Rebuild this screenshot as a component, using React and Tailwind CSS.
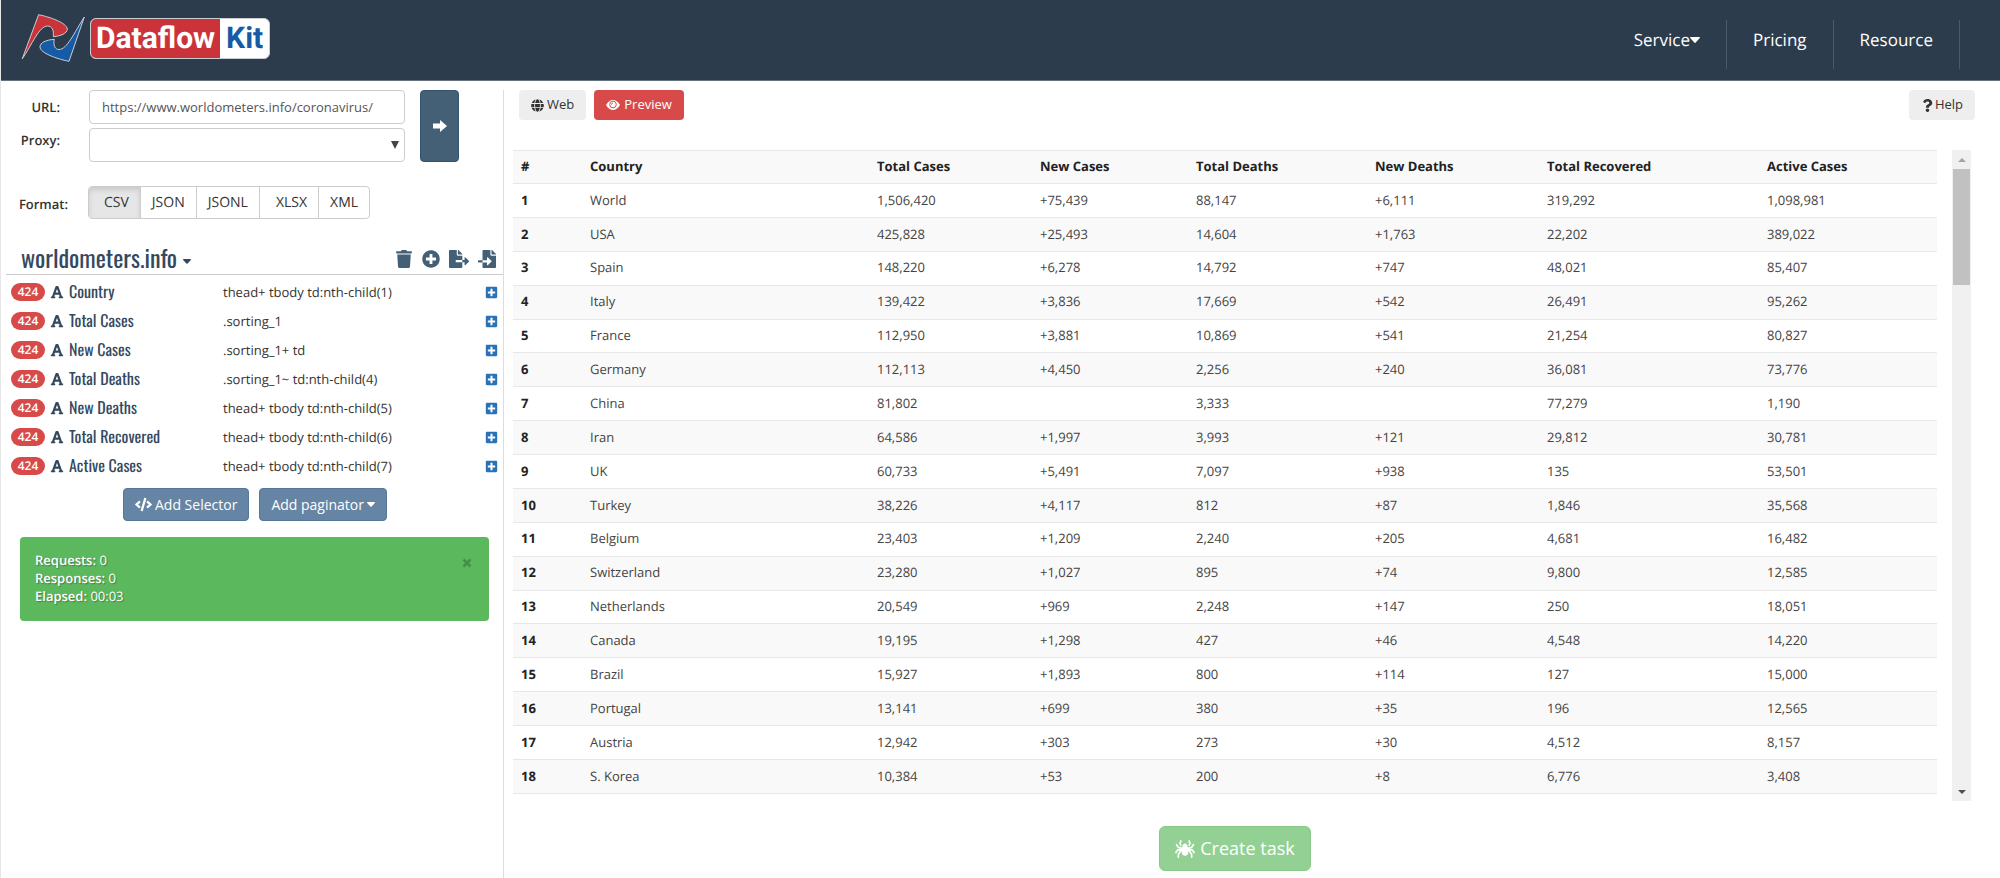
import React, { useState } from 'react';
import {
  FaTrash,
  FaPlusCircle,
  FaFileExport,
  FaFileImport,
  FaPlusSquare,
  FaFont,
  FaCode,
  FaGlobe,
  FaQuestion,
  FaSpider,
} from 'react-icons/fa';

const FORMATS = ['CSV', 'JSON', 'JSONL', 'XLSX', 'XML'];

const SELECTORS = [
  { name: 'Country', path: 'thead+ tbody td:nth-child(1)' },
  { name: 'Total Cases', path: '.sorting_1' },
  { name: 'New Cases', path: '.sorting_1+ td' },
  { name: 'Total Deaths', path: '.sorting_1~ td:nth-child(4)' },
  { name: 'New Deaths', path: 'thead+ tbody td:nth-child(5)' },
  { name: 'Total Recovered', path: 'thead+ tbody td:nth-child(6)' },
  { name: 'Active Cases', path: 'thead+ tbody td:nth-child(7)' },
];

const COLUMNS = ['#', 'Country', 'Total Cases', 'New Cases', 'Total Deaths', 'New Deaths', 'Total Recovered', 'Active Cases'];

const ROWS = [
  ['World', '1,506,420', '+75,439', '88,147', '+6,111', '319,292', '1,098,981'],
  ['USA', '425,828', '+25,493', '14,604', '+1,763', '22,202', '389,022'],
  ['Spain', '148,220', '+6,278', '14,792', '+747', '48,021', '85,407'],
  ['Italy', '139,422', '+3,836', '17,669', '+542', '26,491', '95,262'],
  ['France', '112,950', '+3,881', '10,869', '+541', '21,254', '80,827'],
  ['Germany', '112,113', '+4,450', '2,256', '+240', '36,081', '73,776'],
  ['China', '81,802', '', '3,333', '', '77,279', '1,190'],
  ['Iran', '64,586', '+1,997', '3,993', '+121', '29,812', '30,781'],
  ['UK', '60,733', '+5,491', '7,097', '+938', '135', '53,501'],
  ['Turkey', '38,226', '+4,117', '812', '+87', '1,846', '35,568'],
  ['Belgium', '23,403', '+1,209', '2,240', '+205', '4,681', '16,482'],
  ['Switzerland', '23,280', '+1,027', '895', '+74', '9,800', '12,585'],
  ['Netherlands', '20,549', '+969', '2,248', '+147', '250', '18,051'],
  ['Canada', '19,195', '+1,298', '427', '+46', '4,548', '14,220'],
  ['Brazil', '15,927', '+1,893', '800', '+114', '127', '15,000'],
  ['Portugal', '13,141', '+699', '380', '+35', '196', '12,565'],
  ['Austria', '12,942', '+303', '273', '+30', '4,512', '8,157'],
  ['S. Korea', '10,384', '+53', '200', '+8', '6,776', '3,408'],
];

function Caret({ className }) {
  return (
    <svg viewBox="0 0 10 6" className={className} fill="currentColor" aria-hidden="true">
      <path d="M0.700 0h8.600c.6 0 .9.700.5 1.100L5.500 5.700c-.3.300-.7.300-1 0L.2 1.100C-.2.700.1 0 .7 0z" />
    </svg>
  );
}

function Logo() {
  return (
    <a href="#" aria-label="Dataflow Kit" className="flex items-center gap-[3px]">
      <svg viewBox="0 0 66 52" className="h-[52px] w-[66px]" stroke="#c9ced3" strokeWidth="1" strokeLinejoin="round">
        <path d="M1.300 46.700 L17.600 2.700 C29 5 46 11 46.300 17 C46 21.500 40 24 32.300 24.700 C33 18 31 14 26.500 14 C18 14 11 33 1.300 46.700Z" fill="#cb333b" />
        <path d="M63.300 5 L48 49.300 C36 47 19 41 19 35 C19 30.500 25 28 33.300 27.300 C32 33 34 37.500 38 37.500 C46 37.500 53 21 63.300 5Z" fill="#165ba6" />
      </svg>
      <span className="flex h-[41px] items-center overflow-hidden rounded-md border border-[#c9ced3] bg-white font-[Roboto] text-[30px] font-bold">
        <span className="flex h-full items-center bg-[#cb333b] px-[5px] text-white">Dataflow</span>
        <span className="px-[6px] text-[#165ba6]">Kit</span>
      </span>
    </a>
  );
}

function Header() {
  return (
    <header className="flex h-[81px] items-start justify-between border-b border-[#67727f] bg-[#2c3c4c] pr-10 pl-5">
      <div className="pt-3">
        <Logo />
      </div>
      <nav className="mt-5 flex h-[49px] text-[17px] text-white">
        <a href="#" className="flex items-center border-r border-[#4c5966] px-[26px] pb-[10px]">
          Service
          <Caret className="h-[6px] w-[10px]" />
        </a>
        <a href="#" className="flex items-center border-r border-[#4c5966] px-[26px] pb-[10px]">Pricing</a>
        <a href="#" className="flex items-center border-r border-[#4c5966] px-[26px] pb-[10px]">Resource</a>
      </nav>
    </header>
  );
}

function SourceForm() {
  const [url, setUrl] = useState('https://www.worldometers.info/coronavirus/');
  const [format, setFormat] = useState('CSV');

  return (
    <form onSubmit={e => e.preventDefault()}>
      <div className="flex">
        <div className="grid grid-cols-[59px_316px] gap-x-[29px] gap-y-1">
          <label htmlFor="url" className="pt-[7px] text-right text-[13px] leading-5 font-semibold">URL:</label>
          <input
            id="url"
            value={url}
            onChange={e => setUrl(e.target.value)}
            className="h-[34px] rounded border border-[#ccc] px-3 text-[13px] text-[#555]"
          />
          <label htmlFor="proxy" className="pt-[2px] text-right text-[13px] leading-5 font-semibold">Proxy:</label>
          <div className="relative">
            <select id="proxy" className="h-[34px] w-full appearance-none rounded border border-[#ccc] bg-white px-3 text-[13px]">
              <option value=""></option>
            </select>
            <svg viewBox="0 0 8 8" className="pointer-events-none absolute top-[13px] right-[6px] size-2" fill="#444">
              <path d="M0 0h8L4 8z" />
            </svg>
          </div>
        </div>
        <button type="submit" aria-label="Go" className="ml-[15px] flex w-[39px] items-center justify-center rounded border border-[#34536f] bg-[#446077] text-white">
          <svg viewBox="0 0 14 12" className="h-3 w-[14px]" fill="currentColor">
            <path d="M0 3.500h7V0l7 6-7 6V8.500H0z" />
          </svg>
        </button>
      </div>
      <fieldset aria-label="Format" className="mt-6 flex items-center">
        <span className="w-[67px] pt-1 text-right text-[13px] font-semibold">Format:</span>
        <div className="ml-5 flex h-[33px] rounded border border-[#ccc] text-[14px]">
          {FORMATS.map(f => (
            <label
              key={f}
              className="flex items-center border-r border-[#ccc] px-[11px] first:rounded-l first:pl-[15px] last:rounded-r last:border-r-0 nth-4:pl-4 has-checked:bg-[#e6e6e6] has-checked:shadow-[inset_0_3px_5px_rgba(0,0,0,0.125)]"
            >
              <input
                type="radio"
                name="format"
                value={f}
                checked={format === f}
                onChange={() => setFormat(f)}
                className="sr-only"
              />
              {f}
            </label>
          ))}
        </div>
      </fieldset>
    </form>
  );
}

function SelectorList() {
  return (
    <section className="mt-[25px]">
      <div className="ml-[5px] flex h-[31px] items-center justify-between border-b border-[#ccc] pr-[7px] pl-[15px] text-[#34495e]">
        <button className="flex items-center gap-[6px] pb-1 font-[Oswald,'Roboto_Condensed','Liberation_Sans_Narrow'] text-[24px]">
          worldometers.info
          <Caret className="mt-2 h-[5px] w-2" />
        </button>
        <div className="flex items-center gap-[9px] text-[18px] text-[#446077]">
          <button aria-label="Delete"><FaTrash /></button>
          <button aria-label="Add"><FaPlusCircle /></button>
          <button aria-label="Export"><FaFileExport className="h-[18px] w-5" /></button>
          <button aria-label="Import"><FaFileImport /></button>
        </div>
      </div>
      <ul className="pt-[2px]">
        {SELECTORS.map(s => (
          <li key={s.name} className="flex h-[29px] items-center pr-[5px] pl-[10px]">
            <span className="w-[34px] rounded-full bg-[#d84a4a] text-center text-[12px] leading-[18px] font-semibold text-white">424</span>
            <FaFont className="ml-[5px] size-[14px] text-[#34495e]" />
            <span className="ml-[5px] w-[154px] pb-[2px] font-[Oswald,'Roboto_Condensed','Liberation_Sans_Narrow'] text-[16px] leading-[26px] text-[#34495e]">{s.name}</span>
            <span className="flex-1 pt-[2px] text-[13px]">{s.path}</span>
            <button aria-label={`Add under ${s.name}`} className="pt-[2px] text-[13px] text-[#2a72b8]"><FaPlusSquare /></button>
          </li>
        ))}
      </ul>
      <div className="mt-2 flex justify-center gap-[10px] pl-[6px] text-[14px] text-white">
        <button className="flex h-[33px] items-center gap-[3px] rounded border border-[#54779b] bg-[#6684a3] px-[11px]">
          <FaCode className="size-[17px]" />
          Add Selector
        </button>
        <button className="flex h-[33px] items-center gap-[3px] rounded border border-[#54779b] bg-[#6684a3] px-[11px]">
          Add paginator
          <Caret className="h-[5px] w-2" />
        </button>
      </div>
    </section>
  );
}

function StatusBox() {
  return (
    <div className="mt-4 mr-[14px] ml-[19px] flex justify-between rounded bg-[#5cb85c] px-[15px] pt-[14px] pb-4 text-[13px] leading-[18px] text-white text-shadow-[1px_1px_1px_rgba(0,0,0,0.3)]">
      <div>
        <p><b className="font-semibold">Requests:</b> 0</p>
        <p><b className="font-semibold">Responses:</b> 0</p>
        <p><b className="font-semibold">Elapsed:</b> 00:03</p>
      </div>
      <button aria-label="Close" className="mt-[6px] mr-[2px] h-3 text-[#468e46]">
        <svg viewBox="0 0 10 10" className="size-[10px]" stroke="currentColor" strokeWidth="2.5">
          <path d="M1.500 1.500l7 7M8.500 1.500l-7 7" />
        </svg>
      </button>
    </div>
  );
}

function EyeIcon() {
  return (
    <svg viewBox="0 0 14 10" className="h-[10px] w-[14px]" fill="none">
      <path d="M0 5C2 1.500 4.500 0 7 0s5 1.500 7 5c-2 3.500-4.500 5-7 5S2 8.500 0 5z" fill="currentColor" />
      <circle cx="7" cy="4.500" r="3.300" stroke="#d84a4a" strokeWidth="1" />
      <path d="M5.500 4.700A1.600 1.600 0 0 1 7 3" stroke="#d84a4a" strokeWidth="0.900" />
    </svg>
  );
}

function Scrollbar() {
  return (
    <div className="flex w-[19px] flex-col items-center justify-between bg-[#f0f0f0] pb-[7px]" aria-hidden="true">
      <div className="flex w-full flex-col items-center">
        <svg viewBox="0 0 8 4" className="mt-2 mb-[7px] h-1 w-2" fill="#a3a3a3"><path d="M0 4h8L4 0z" /></svg>
        <div className="h-[116px] w-[17px] bg-[#c1c1c1]" />
      </div>
      <svg viewBox="0 0 8 4" className="h-1 w-2" fill="#505050"><path d="M0 0h8L4 4z" /></svg>
    </div>
  );
}

function ResultTable() {
  return (
    <table className="h-[644px] w-full table-fixed border-collapse border-b border-[#e7e7e7] text-left text-[13px] text-[#444]">
      <colgroup>
        <col className="w-[69px]" />
        <col className="w-[287px]" />
        <col className="w-[163px]" />
        <col className="w-[156px]" />
        <col className="w-[179px]" />
        <col className="w-[172px]" />
        <col className="w-[220px]" />
        <col className="w-[178px]" />
      </colgroup>
      <thead className="border-t border-[#e7e7e7] bg-[#f9f9f9] text-[#222]">
        <tr className="h-[33px]">
          {COLUMNS.map(c => (
            <th key={c} className="px-2 font-bold">{c}</th>
          ))}
        </tr>
      </thead>
      <tbody>
        {ROWS.map((row, i) => (
          <tr key={row[0]} className="h-[33px] border-t border-[#e7e7e7] even:bg-[#f9f9f9]">
            <th className="px-2 font-bold text-[#222]">{i + 1}</th>
            {row.map((cell, j) => (
              <td key={j} className="px-2">{cell}</td>
            ))}
          </tr>
        ))}
      </tbody>
    </table>
  );
}

export default function App() {
  return (
    <div className="flex min-h-screen flex-col border-l border-[#e7e7e7] bg-white font-['Open_Sans',sans-serif] text-[#333] [text-rendering:geometricPrecision]">
      <Header />
      <main className="flex flex-1 pt-[9px]">
        <aside className="w-[503px] shrink-0 border-r border-[#ddd]">
          <SourceForm />
          <SelectorList />
          <StatusBox />
        </aside>
        <section className="flex flex-1 flex-col pr-[29px] pl-[9px]">
          <div className="-mr-1 flex gap-2 pl-[6px] text-[13px]">
            <button className="flex h-[30px] items-center gap-[3px] rounded bg-[#eee] px-3"><FaGlobe />Web</button>
            <button className="flex h-[30px] items-center gap-1 rounded bg-[#d84a4a] px-3 text-white"><EyeIcon />Preview</button>
            <button className="ml-auto flex h-[30px] items-center gap-px rounded bg-[#eee] px-3"><FaQuestion />Help</button>
          </div>
          <div className="mt-[30px] flex h-[651px] gap-[15px]">
            <div className="flex-1"><ResultTable /></div>
            <Scrollbar />
          </div>
          <div className="mt-[25px] flex justify-center pr-[14px]">
            <button className="flex h-[45px] items-center gap-[5px] rounded-md border border-[#88cc88] bg-[#93d093] px-[15px] text-[18px] text-white">
              <FaSpider className="size-5" />
              Create task
            </button>
          </div>
        </section>
      </main>
    </div>
  );
}
